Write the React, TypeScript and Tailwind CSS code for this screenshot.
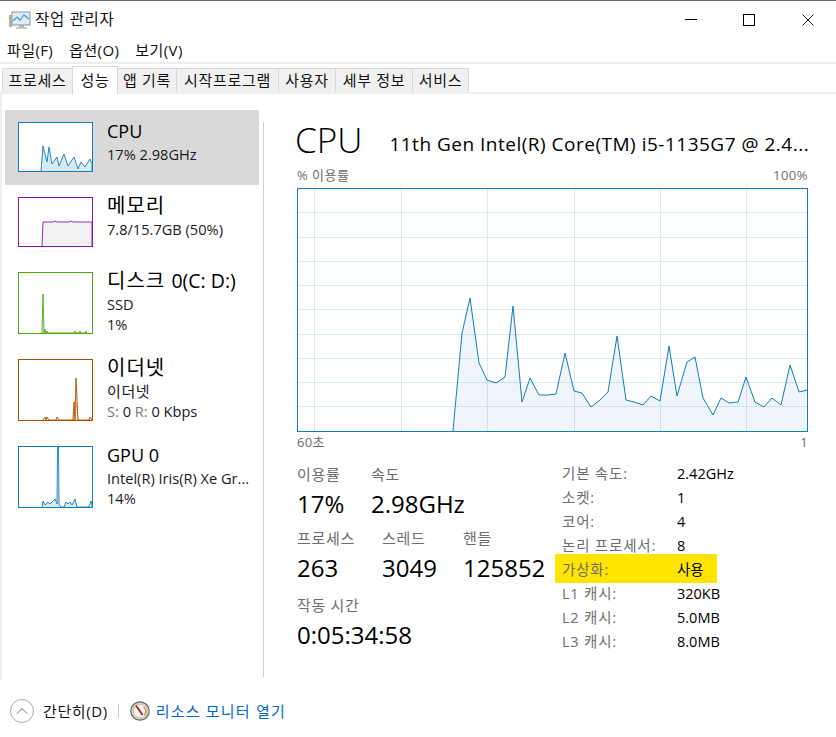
import React from "react";
import { ChevronUp } from "lucide-react";

const cpuPoints = "453,431 462,333 470,298 479,363 487,380 496,383 505,377 513,306 522,402 530,378 539,395 548,395 556,394 565,353 574,391 582,393 591,407 600,400 608,392 617,336 626,400 634,402 643,405 651,396 660,401 669,346 677,396 687,362 695,357 703,398 713,415 721,398 729,403 738,402 746,377 755,402 764,407 772,398 781,405 790,365 799,392 807,390";

const tabs = ["프로세스", "성능", "앱 기록", "시작프로그램", "사용자", "세부 정보", "서비스"];
const tabWidths = ["w-[71px]", "w-[46px]", "w-[59px]", "w-[102px]", "w-[57px]", "w-[77px]", "w-[56px]"];

const specs = [
  ["기본 속도:", "2.42GHz"],
  ["소켓:", "1"],
  ["코어:", "4"],
  ["논리 프로세서:", "8"],
  ["가상화:", "사용"],
  ["L1 캐시:", "320KB"],
  ["L2 캐시:", "5.0MB"],
  ["L3 캐시:", "8.0MB"],
];

function AppIcon() {
  return (
    <svg width="22" height="20" viewBox="0 0 22 20" className="shrink-0">
      <rect x="3" y="2" width="18" height="13" fill="#dfeaf2" stroke="#8d979f" />
      <path d="M4 11 L8 7 L11 10 L15 5 L20 9" fill="none" stroke="#3f9bd6" strokeWidth="1.2" />
      <rect x="0" y="5" width="3" height="12" fill="#a9b0b4" />
      <rect x="0.5" y="7" width="2" height="2" fill="#7ccf4a" />
      <rect x="10" y="15" width="5" height="2" fill="#aab1b5" />
      <rect x="7" y="17" width="11" height="2" fill="#c4c9cc" />
    </svg>
  );
}

function GaugeIcon() {
  return (
    <svg width="20" height="20" viewBox="0 0 20 20" className="shrink-0">
      <circle cx="10" cy="10" r="9.2" fill="#d8d5ce" stroke="#6b665e" strokeWidth="1.2" />
      <circle cx="10" cy="10" r="6.8" fill="#fbfaf6" stroke="#b9b3a6" strokeWidth="0.8" />
      <path d="M13.5 6 A6 6 0 0 1 14.5 14" fill="none" stroke="#e08a2e" strokeWidth="1.4" />
      <path d="M6 4.5 L12.5 14" stroke="#c8221c" strokeWidth="2" />
    </svg>
  );
}

function Thumb({ color, fill, h, children }: { color: string; fill: string; h: string; children: (f: string) => React.ReactNode }) {
  return (
    <div className={`w-[75px] ${h} shrink-0 border ${color} bg-white overflow-hidden`}>
      {children(fill)}
    </div>
  );
}

function Row({ selected, h, thumb, title, lines }: { selected?: boolean; h: string; thumb: React.ReactNode; title: React.ReactNode; lines: React.ReactNode[] }) {
  return (
    <div className={`flex ${h} pt-3 pl-[13px] gap-[14px] ${selected ? "bg-[#d9d9d9]" : ""}`}>
      {thumb}
      <div className="min-w-0 flex-1 -mt-[4px]">
        <div className="text-[18px] leading-[26px] text-black whitespace-nowrap">{title}</div>
        {lines.map((l, i) => (
          <div key={i} className="text-[14.6px] leading-[20px] text-[#1a1a1a] whitespace-nowrap">{l}</div>
        ))}
      </div>
    </div>
  );
}

function Stat({ label, value, w }: { label: string; value: string; w: string }) {
  return (
    <div className={w}>
      <div className="text-[15px] tracking-[0.7px] leading-[20px] text-[#6d6d6d] whitespace-nowrap">{label}</div>
      <div className="text-[24px] leading-[34px] text-black mt-[3px]">{value}</div>
    </div>
  );
}

export default function App() {
  return (
    <div className="w-[836px] h-[737px] bg-white overflow-hidden flex flex-col font-['Open_Sans','Noto_Sans_CJK_KR',sans-serif] text-black">
      <div className="h-px shrink-0 bg-[#6e6e6e]" />

      {/* title bar */}
      <div className="h-[37px] shrink-0 flex items-center pl-[9px] pr-[22px]">
        <AppIcon />
        <span className="ml-[4px] text-[15.5px] tracking-[0.7px] text-[#111]">작업 관리자</span>
        <div className="ml-auto flex items-center gap-[46px]">
          <svg width="12" height="12" viewBox="0 0 12 12"><path d="M0 5.5H12" stroke="#000" /></svg>
          <svg width="12" height="12" viewBox="0 0 12 12"><rect x="0.5" y="0.5" width="11" height="11" fill="none" stroke="#000" /></svg>
          <svg width="12" height="12" viewBox="0 0 12 12" className="ml-px"><path d="M0.5 0.5L11.5 11.5M11.5 0.5L0.5 11.5" stroke="#000" strokeWidth="0.9" /></svg>
        </div>
      </div>

      {/* menu */}
      <div className="h-[24px] shrink-0 flex items-center gap-[16px] pl-[7px] text-[15px] tracking-[0.4px] text-[#111]">
        <span>파일(F)</span>
        <span>옵션(O)</span>
        <span>보기(V)</span>
      </div>

      {/* tabs */}
      <div className="h-[32px] shrink-0 border-t-2 border-b-2 border-[#eeeeee] flex items-end pl-[2px]">
        {tabs.map((t, i) => (
          <div
            key={t}
            className={`${tabWidths[i]} flex items-center justify-center text-[15px] tracking-[0.7px] text-[#111] border-t border-r border-[#d9d9d9] ${
              i === 1
                ? "h-[28px] bg-white border-l -mb-[2px] -ml-px"
                : "h-[24px] bg-[#f0f0f0]" + (i === 0 ? " border-l" : "")
            }`}
          >
            {t}
          </div>
        ))}
      </div>

      {/* body */}
      <div className="flex-1 flex min-h-0 border-l-2 border-[#f0f0f0]">
        <div className="w-[261px] shrink-0 pt-[16px]">
          <div className="w-[254px] ml-[3px]">
            <Row
              selected
              h="h-[75px]"
              title="CPU"
              lines={["17% 2.98GHz"]}
              thumb={
                <Thumb color="border-[#117dbb]" fill="#d9eaf4" h="h-[50px]">
                  {(f) => (
                    <svg viewBox="0 0 73 48" className="w-full h-full block">
                      <polyline fill={f} stroke="#117dbb" strokeWidth="0.9" points="22,48 24,23 28,39 30,24 33,41 38,34 40,43 45,31 49,43 55,34 59,46 62,39 66,44 71,36 73,41 73,48" />
                    </svg>
                  )}
                </Thumb>
              }
            />
            <Row
              h="h-[75px]"
              title={<span className="text-[20px] tracking-[1px]">메모리</span>}
              lines={["7.8/15.7GB (50%)"]}
              thumb={
                <Thumb color="border-[#8b12ae]" fill="#f4f2f4" h="h-[50px]">
                  {(f) => (
                    <svg viewBox="0 0 73 48" className="w-full h-full block">
                      <polyline fill={f} stroke="#8b12ae" strokeWidth="0.9" points="23,48 24,24 34,24 36,23 38,24 50,24 52,23 54,24 73,24 73,48" />
                    </svg>
                  )}
                </Thumb>
              }
            />
            <Row
              h="h-[87px]"
              title={<><span className="text-[20px] tracking-[1px]">디스크 </span><span className="text-[19.5px]">0(C: D:)</span></>}
              lines={["SSD", "1%"]}
              thumb={
                <Thumb color="border-[#4da60c]" fill="#eff7e8" h="h-[62px]">
                  {(f) => (
                    <svg viewBox="0 0 73 60" className="w-full h-full block">
                      <polyline fill={f} stroke="#4da60c" strokeWidth="0.9" points="23,60 24,21 25,60 26,56 27,60 28,58 29,60 55,60 56,58 57,60 60,60 61,58 62,60 66,60 67,58 68,60" />
                    </svg>
                  )}
                </Thumb>
              }
            />
            <Row
              h="h-[87px]"
              title={<span className="text-[20px] tracking-[1px]">이더넷</span>}
              lines={[
                <span key="n" className="tracking-[0.6px] text-[15px]">이더넷</span>,
                <span key="s"><span className="text-[#777]">S:</span> 0 <span className="text-[#777]">R:</span> 0 Kbps</span>,
              ]}
              thumb={
                <Thumb color="border-[#a74f01]" fill="#fcf3eb" h="h-[62px]">
                  {(f) => (
                    <svg viewBox="0 0 73 60" className="w-full h-full block">
                      <polyline fill={f} stroke="#a74f01" strokeWidth="0.9" points="24,60 26,57 27,60 28,57 30,60 37,60 38,57 40,60 54,60 55,42 56,60 57,18 59,60 70,60 71,57 73,60" />
                      <polyline fill="none" stroke="#c9752e" strokeWidth="0.9" strokeDasharray="1.5 1.5" points="54,60 55,42 57,42 59,60" />
                    </svg>
                  )}
                </Thumb>
              }
            />
            <Row
              h="h-[87px]"
              title="GPU 0"
              lines={["Intel(R) Iris(R) Xe Gr...", "14%"]}
              thumb={
                <Thumb color="border-[#117dbb]" fill="#d9eaf4" h="h-[62px]">
                  {(f) => (
                    <svg viewBox="0 0 73 60" className="w-full h-full block">
                      <polyline fill={f} stroke="#117dbb" strokeWidth="0.9" points="23,60 24,54 26,58 29,55 31,57 34,54 36,52 38,57 38.5,0 39.5,0 40,57 42,60 45,60 47,55 49,57 51,55 53,58 56,52 58,60 70,60 72,54 73,58 73,60" />
                    </svg>
                  )}
                </Thumb>
              }
            />
          </div>
        </div>

        <div className="w-px mt-[28px] h-[555px] bg-[#d0d0d0] shrink-0" />

        {/* detail */}
        <div className="flex-1 min-w-0 pl-[33px] pr-[28px] pt-[24px]">
          <div className="flex items-center h-[44px] -ml-[2px]">
            <span className="text-[35px] font-light leading-[44px] text-black">CPU</span>
            <span className="ml-[27px] text-[19px] tracking-[0.5px] leading-[30px] mt-[8px] whitespace-nowrap">
              11th Gen Intel(R) Core(TM) i5-1135G7 @ 2.4...
            </span>
          </div>
          <div className="flex justify-between text-[13px] tracking-[0.5px] leading-[18px] text-[#6d6d6d] mt-[4px]">
            <span>% 이용률</span>
            <span>100%</span>
          </div>
          <svg width="511" height="244" viewBox="297 188 511 244" className="block mt-[4px]">
            {[212, 237, 261, 285, 309, 334, 358, 382, 406].map((y) => (
              <line key={y} x1="297" x2="807" y1={y + 0.5} y2={y + 0.5} stroke="#d9eaf4" />
            ))}
            {[314, 401, 487, 574, 660, 746].map((x) => (
              <line key={x} x1={x + 0.5} x2={x + 0.5} y1="188" y2="431" stroke="#d9eaf4" />
            ))}
            <polygon points={`${cpuPoints} 807,431`} fill="#2f7fbf" fillOpacity="0.08" />
            <polyline points={cpuPoints} fill="none" stroke="#117dbb" strokeWidth="1" />
            <rect x="297.5" y="188.5" width="510" height="243" fill="none" stroke="#117dbb" />
          </svg>
          <div className="flex justify-between text-[13px] tracking-[0.3px] leading-[18px] text-[#6d6d6d] mt-[1px]">
            <span>60초</span>
            <span>1</span>
          </div>

          <div className="flex mt-[13px]">
            <div className="w-[265px] shrink-0">
              <div className="flex">
                <Stat label="이용률" value="17%" w="w-[74px]" />
                <Stat label="속도" value="2.98GHz" w="w-[120px]" />
              </div>
              <div className="flex mt-[7px]">
                <Stat label="프로세스" value="263" w="w-[85px]" />
                <Stat label="스레드" value="3049" w="w-[81px]" />
                <Stat label="핸들" value="125852" w="w-[90px]" />
              </div>
              <div className="mt-[10px]">
                <Stat label="작동 시간" value="0:05:34:58" w="w-[160px]" />
              </div>
            </div>
            <div className="flex-1 -mt-[2px]">
              {specs.map(([k, v]) => (
                <div
                  key={k}
                  className={`flex items-center -ml-[7px] w-[162px] pl-[7px] text-[14.5px] ${
                    k === "가상화:" ? "bg-[#ffe400] h-[29px] pt-[3px] -mt-[4px] -mb-[1px] relative" : "h-[24px]"
                  }`}
                >
                  <span className="w-[115px] shrink-0 whitespace-nowrap tracking-[0.8px] text-[#6d6d6d]">{k}</span>
                  <span className="text-black">{v}</span>
                </div>
              ))}
            </div>
          </div>
        </div>
      </div>

      {/* footer */}
      <div className="h-[56px] shrink-0 flex items-center pl-[10px] pt-[4px]">
        <div className="w-[24px] h-[24px] rounded-full border border-[#ababab] flex items-center justify-center">
          <ChevronUp size={20} strokeWidth={1.25} className="text-[#9a9a9a]" />
        </div>
        <span className="ml-[9px] text-[15px] tracking-[0.6px] text-[#111]">간단히(D)</span>
        <div className="w-px h-[14px] bg-[#c8c8c8] ml-[10px]" />
        <div className="ml-[11px]"><GaugeIcon /></div>
        <span className="ml-[6px] text-[15px] tracking-[1.2px] text-[#0066cc]">리소스 모니터 열기</span>
      </div>
    </div>
  );
}
